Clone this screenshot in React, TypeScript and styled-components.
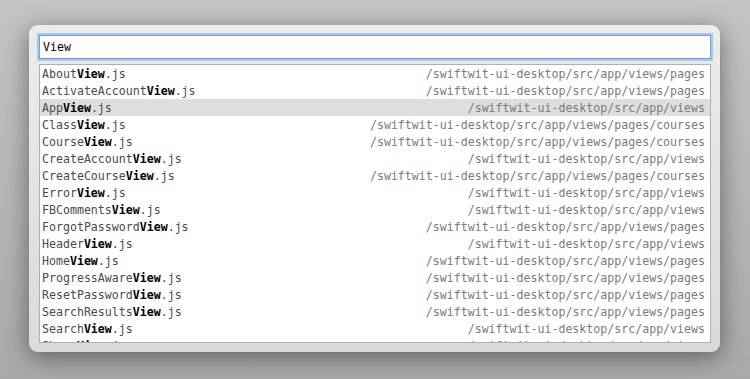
import React from "react";
import styled, { createGlobalStyle } from "styled-components";

const Global = createGlobalStyle`
  html, body { margin: 0; padding: 0; }
  body {
    width: 750px;
    height: 379px;
    overflow: hidden;
    font-family: "DejaVu Sans Mono", "Liberation Mono", monospace;
  }
`;

const Page = styled.div`
  width: 750px;
  height: 379px;
  box-sizing: border-box;
  padding: 25px 30px 27px 29px;
  background: linear-gradient(#c4c4c4, #a9a9a9);
  display: flex;
`;

const Panel = styled.div`
  flex: 1;
  box-sizing: border-box;
  border-radius: 9px;
  background: linear-gradient(#ececec, #dadada);
  box-shadow: 0 5px 24px rgba(0, 0, 0, 0.45);
  padding: 10px 9px 9px 10px;
  display: flex;
  flex-direction: column;
  gap: 5px;
`;

const Input = styled.div`
  height: 24px;
  box-sizing: border-box;
  border: 1px solid #6f9fd6;
  box-shadow: 0 0 0 2px #a9c8ec;
  background: #fff;
  display: flex;
  align-items: center;
  padding-left: 3px;
  font-size: 11.6px;
  color: #000;
`;

const List = styled.div`
  flex: 1;
  background: #fff;
  border: 1px solid #b0b0b0;
  overflow: hidden;
`;

const Row = styled.div<{ $selected?: boolean }>`
  height: 17px;
  display: flex;
  align-items: center;
  justify-content: space-between;
  padding: 0 5px 0 2px;
  font-size: 11.6px;
  white-space: nowrap;
  background: ${(p) => (p.$selected ? "#dedede" : "transparent")};
`;

const Name = styled.span`
  color: #4a4a4a;
`;

const Match = styled.b`
  color: #000;
  font-weight: bold;
`;

const Path = styled.span`
  color: #7a7a7a;
`;

const rows: [string, string][] = [
  ["About", "/swiftwit-ui-desktop/src/app/views/pages"],
  ["ActivateAccount", "/swiftwit-ui-desktop/src/app/views/pages"],
  ["App", "/swiftwit-ui-desktop/src/app/views"],
  ["Class", "/swiftwit-ui-desktop/src/app/views/pages/courses"],
  ["Course", "/swiftwit-ui-desktop/src/app/views/pages/courses"],
  ["CreateAccount", "/swiftwit-ui-desktop/src/app/views"],
  ["CreateCourse", "/swiftwit-ui-desktop/src/app/views/pages/courses"],
  ["Error", "/swiftwit-ui-desktop/src/app/views"],
  ["FBComments", "/swiftwit-ui-desktop/src/app/views"],
  ["ForgotPassword", "/swiftwit-ui-desktop/src/app/views/pages"],
  ["Header", "/swiftwit-ui-desktop/src/app/views"],
  ["Home", "/swiftwit-ui-desktop/src/app/views/pages"],
  ["ProgressAware", "/swiftwit-ui-desktop/src/app/views/pages"],
  ["ResetPassword", "/swiftwit-ui-desktop/src/app/views/pages"],
  ["SearchResults", "/swiftwit-ui-desktop/src/app/views/pages"],
  ["Search", "/swiftwit-ui-desktop/src/app/views"],
  ["Share", "/swiftwit-ui-desktop/src/app/views"],
];

export default function App() {
  return (
    <>
      <Global />
      <Page>
        <Panel>
          <Input>View</Input>
          <List>
            {rows.map(([pre, path], i) => (
              <Row key={pre} $selected={i === 2}>
                <Name>
                  {pre}
                  <Match>View</Match>.js
                </Name>
                <Path>{path}</Path>
              </Row>
            ))}
          </List>
        </Panel>
      </Page>
    </>
  );
}
